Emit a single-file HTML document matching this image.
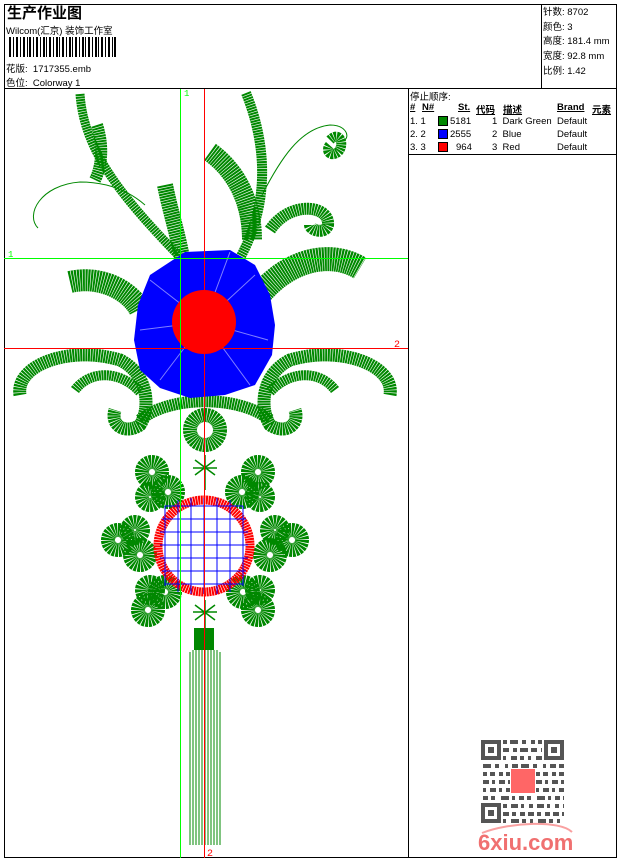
<!DOCTYPE html>
<html><head><meta charset="utf-8"><style>
body{margin:0;background:#fff;width:620px;height:860px;position:relative;overflow:hidden;font-family:"Liberation Sans","Noto Sans CJK SC",sans-serif;color:#000}
.a{position:absolute;white-space:nowrap}
.s{font-size:9.5px}
.b{font-weight:bold;text-decoration:underline}
</style></head><body>
<svg width="620" height="860" style="position:absolute;left:0;top:0">
<g fill="none" stroke="#000" stroke-width="1">
<rect x="4.5" y="4.5" width="612" height="853"/>
<line x1="4" y1="88.5" x2="617" y2="88.5"/>
<line x1="541.5" y1="4" x2="541.5" y2="88"/>
<line x1="408.5" y1="88" x2="408.5" y2="858"/>
<line x1="408" y1="154.5" x2="617" y2="154.5"/>
</g>
<g fill="#000">
<rect x="9" y="37" width="2" height="20"/><rect x="13" y="37" width="1" height="20"/><rect x="16" y="37" width="2" height="20"/><rect x="20" y="37" width="1" height="20"/><rect x="23" y="37" width="2" height="20"/><rect x="27" y="37" width="1" height="20"/><rect x="29" y="37" width="2" height="20"/><rect x="33" y="37" width="1" height="20"/><rect x="36" y="37" width="2" height="20"/><rect x="40" y="37" width="1" height="20"/><rect x="43" y="37" width="2" height="20"/><rect x="46" y="37" width="1" height="20"/><rect x="49" y="37" width="2" height="20"/><rect x="53" y="37" width="1" height="20"/><rect x="56" y="37" width="2" height="20"/><rect x="59" y="37" width="1" height="20"/><rect x="62" y="37" width="2" height="20"/><rect x="66" y="37" width="1" height="20"/><rect x="69" y="37" width="2" height="20"/><rect x="72" y="37" width="1" height="20"/><rect x="75" y="37" width="2" height="20"/><rect x="79" y="37" width="1" height="20"/><rect x="82" y="37" width="2" height="20"/><rect x="85" y="37" width="1" height="20"/><rect x="88" y="37" width="2" height="20"/><rect x="92" y="37" width="1" height="20"/><rect x="95" y="37" width="2" height="20"/><rect x="98" y="37" width="1" height="20"/><rect x="101" y="37" width="2" height="20"/><rect x="105" y="37" width="1" height="20"/><rect x="108" y="37" width="2" height="20"/><rect x="112" y="37" width="1" height="20"/><rect x="114" y="37" width="2" height="20"/>
</g>
<rect x="438.5" y="116.5" width="9" height="9" fill="#080" stroke="#000"/>
<rect x="438.5" y="129.5" width="9" height="9" fill="#00f" stroke="#000"/>
<rect x="438.5" y="142.5" width="9" height="9" fill="#f00" stroke="#000"/>
<g fill="none" stroke="#080" stroke-dasharray="2 0.6">
<path d="M80,94 C84,150 120,195 178,255" stroke-width="9"/>
<path d="M97,125 C105,150 100,170 95,180" stroke-width="12"/>
<path d="M165,185 C170,210 178,235 182,258" stroke-width="16"/>
<path d="M246,93 C265,140 272,200 240,258" stroke-width="10"/>
<path d="M210,152 C235,170 252,200 252,240" stroke-width="20"/>
<path d="M270,230 C290,200 330,205 328,225 C325,235 310,230 310,225" stroke-width="12"/>
<path d="M262,292 C290,260 330,250 360,268" stroke-width="24"/>
<path d="M70,282 C100,275 130,290 140,310" stroke-width="22"/>
<path d="M20,395 C15,365 70,345 120,360 C150,375 150,410 140,425 C125,435 110,425 115,410" stroke-width="13"/>
<path d="M75,390 C90,370 120,370 140,392" stroke-width="10"/>
<path d="M390,395 C395,365 340,345 290,360 C260,375 260,410 270,425 C285,435 300,425 295,410" stroke-width="13"/>
<path d="M335,390 C320,370 290,370 270,392" stroke-width="10"/>
<path d="M140,420 C170,395 240,395 270,420" stroke-width="12"/>
<path d="M330,140 C340,130 345,145 338,152 C330,158 325,150 330,145" stroke-width="10"/>
<circle cx="205" cy="430" r="15" stroke-width="14"/>
</g>
<g fill="none" stroke="#080" stroke-width="1">
<path d="M38,228 C25,215 40,185 80,182 C110,182 130,192 145,205"/>
<path d="M262,195 C280,160 300,128 330,125 C345,125 350,135 345,140"/>
</g>
<g fill="none" stroke="#080" stroke-width="14" stroke-dasharray="2 0.6">
<circle cx="152" cy="472" r="10"/><circle cx="168" cy="492" r="10"/><circle cx="150" cy="497" r="8"/>
<circle cx="258" cy="472" r="10"/><circle cx="242" cy="492" r="10"/><circle cx="260" cy="497" r="8"/>
<circle cx="118" cy="540" r="10"/><circle cx="140" cy="555" r="10"/><circle cx="135" cy="530" r="8"/>
<circle cx="292" cy="540" r="10"/><circle cx="270" cy="555" r="10"/><circle cx="275" cy="530" r="8"/>
<circle cx="148" cy="610" r="10"/><circle cx="165" cy="592" r="10"/><circle cx="150" cy="590" r="8"/>
<circle cx="258" cy="610" r="10"/><circle cx="243" cy="592" r="10"/><circle cx="260" cy="590" r="8"/>
</g>
<g stroke="#080" stroke-width="1">
<path d="M190,652 V845 M193,650 V845 M196,650 V845 M199,650 V845 M202,650 V845 M205,650 V845 M208,650 V845 M211,650 V845 M214,650 V845 M217,650 V845 M220,652 V845"/>
</g>
<rect x="194" y="628" width="20" height="22" fill="#080"/>
<g stroke="#080" stroke-width="1.5"><path d="M195,460 L215,475 M215,460 L195,475 M205,455 V490 M193,468 H217 M195,605 L215,620 M215,605 L195,620 M193,612 H217 M205,600 V628"/></g>
<path d="M185,252 L230,250 L255,265 L270,295 L275,325 L272,355 L255,385 L225,395 L190,398 L160,388 L140,370 L134,340 L138,305 L150,275 Z" fill="#00f"/>
<g stroke="#fff" stroke-width="1" opacity="0.5">
<path d="M204,322 L150,280 M204,322 L140,330 M204,322 L160,380 M204,322 L250,385 M204,322 L268,340 M204,322 L255,275 M204,322 L230,252"/>
</g>
<circle cx="204" cy="322" r="32" fill="#f00"/>
<circle cx="204" cy="546" r="46" fill="none" stroke="#f00" stroke-width="9" stroke-dasharray="2 0.6"/>
<g stroke="#00f" stroke-width="1">
<path d="M165,506 V586 M178,500 V592 M191,498 V594 M204,498 V594 M217,498 V594 M230,500 V592 M243,506 V586"/>
<path d="M165,506 H243 M162,519 H246 M160,532 H248 M160,545 H248 M160,558 H248 M162,571 H246 M165,584 H243"/>
</g>
<line x1="180.5" y1="89" x2="180.5" y2="858" stroke="#0f0"/>
<line x1="204.5" y1="89" x2="204.5" y2="858" stroke="#f00"/>
<line x1="4" y1="258.5" x2="408" y2="258.5" stroke="#0f0"/>
<line x1="4" y1="348.5" x2="408" y2="348.5" stroke="#f00"/>
<text x="184" y="96" font-size="9" fill="#0f0" font-family="Liberation Mono">1</text>
<text x="8" y="257" font-size="9" fill="#0f0" font-family="Liberation Mono">1</text>
<text x="394" y="347" font-size="10" fill="#f00" font-family="Liberation Mono">2</text>
<text x="207" y="856" font-size="10" fill="#f00" font-family="Liberation Mono">2</text>
<g stroke="#555" stroke-width="4">
<path d="M503,742 H542" stroke-dasharray="4 3 8 4 4 5"/>
<path d="M503,750 H542" stroke-dasharray="6 4 4 3 8 3"/>
<path d="M503,758 H542" stroke-dasharray="3 5 6 3 4 4"/>
<path d="M483,766 H564" stroke-dasharray="8 4 4 6 3 4 6 3"/>
<path d="M483,774 H510 M536,774 H564" stroke-dasharray="4 3 5 4"/>
<path d="M483,782 H510 M536,782 H564" stroke-dasharray="6 3 3 4"/>
<path d="M483,790 H510 M536,790 H564" stroke-dasharray="3 4 6 3"/>
<path d="M483,798 H564" stroke-dasharray="5 3 4 6 8 3 3 4"/>
<path d="M503,806 H564" stroke-dasharray="4 4 7 3 3 5"/>
<path d="M503,814 H564" stroke-dasharray="6 3 4 4 5 3"/>
<path d="M503,821 H564" stroke-dasharray="3 5 8 3 4 4"/>
</g>
<g fill="#555">
<rect x="481" y="740" width="20" height="20"/><rect x="485" y="744" width="12" height="12" fill="#fff"/><rect x="488" y="747" width="6" height="6"/>
<rect x="544" y="740" width="20" height="20"/><rect x="548" y="744" width="12" height="12" fill="#fff"/><rect x="551" y="747" width="6" height="6"/>
<rect x="481" y="803" width="20" height="20"/><rect x="485" y="807" width="12" height="12" fill="#fff"/><rect x="488" y="810" width="6" height="6"/>
</g>
<rect x="511" y="769" width="24" height="24" fill="#f66"/>
<path d="M482,833 C510,822 560,820 572,832" fill="none" stroke="#f9a0a0" stroke-width="2"/>
<text x="478" y="850" font-size="22" font-weight="bold" fill="#f07070" font-family="Liberation Sans">6xiu.com</text>
</svg>
<div class="a" style="left:7px;top:2px;font-size:15px;font-weight:bold">生产作业图</div>
<div class="a s" style="left:6px;top:23px">Wilcom(汇京) 装饰工作室</div>
<div class="a s" style="left:6px;top:61px">花版:&nbsp; 1717355.emb</div>
<div class="a s" style="left:6px;top:75px">色位:&nbsp; Colorway 1</div>
<div class="a s" style="left:543px;top:6px;line-height:14.7px">针数: 8702<br>颜色: 3<br>高度: 181.4 mm<br>宽度: 92.8 mm<br>比例: 1.42</div>
<div class="a s" style="left:410px;top:89px">停止顺序:</div>
<div class="a s b" style="left:410px;top:102px">#</div>
<div class="a s b" style="left:422px;top:102px">N#</div>
<div class="a s b" style="left:458px;top:102px">St.</div>
<div class="a s b" style="left:476px;top:102px">代码</div>
<div class="a s b" style="left:503px;top:102px">描述</div>
<div class="a s b" style="left:557px;top:102px">Brand</div>
<div class="a s b" style="left:592px;top:102px">元素</div>
<div class="a s" style="left:410px;top:116px">1. 1</div><div class="a s" style="left:450px;top:116px">5181</div><div class="a s" style="left:492px;top:116px">1&nbsp; Dark Green</div><div class="a s" style="left:557px;top:116px">Default</div>
<div class="a s" style="left:410px;top:129px">2. 2</div><div class="a s" style="left:450px;top:129px">2555</div><div class="a s" style="left:492px;top:129px">2&nbsp; Blue</div><div class="a s" style="left:557px;top:129px">Default</div>
<div class="a s" style="left:410px;top:142px">3. 3</div><div class="a s" style="left:456px;top:142px">964</div><div class="a s" style="left:492px;top:142px">3&nbsp; Red</div><div class="a s" style="left:557px;top:142px">Default</div>
</body></html>
